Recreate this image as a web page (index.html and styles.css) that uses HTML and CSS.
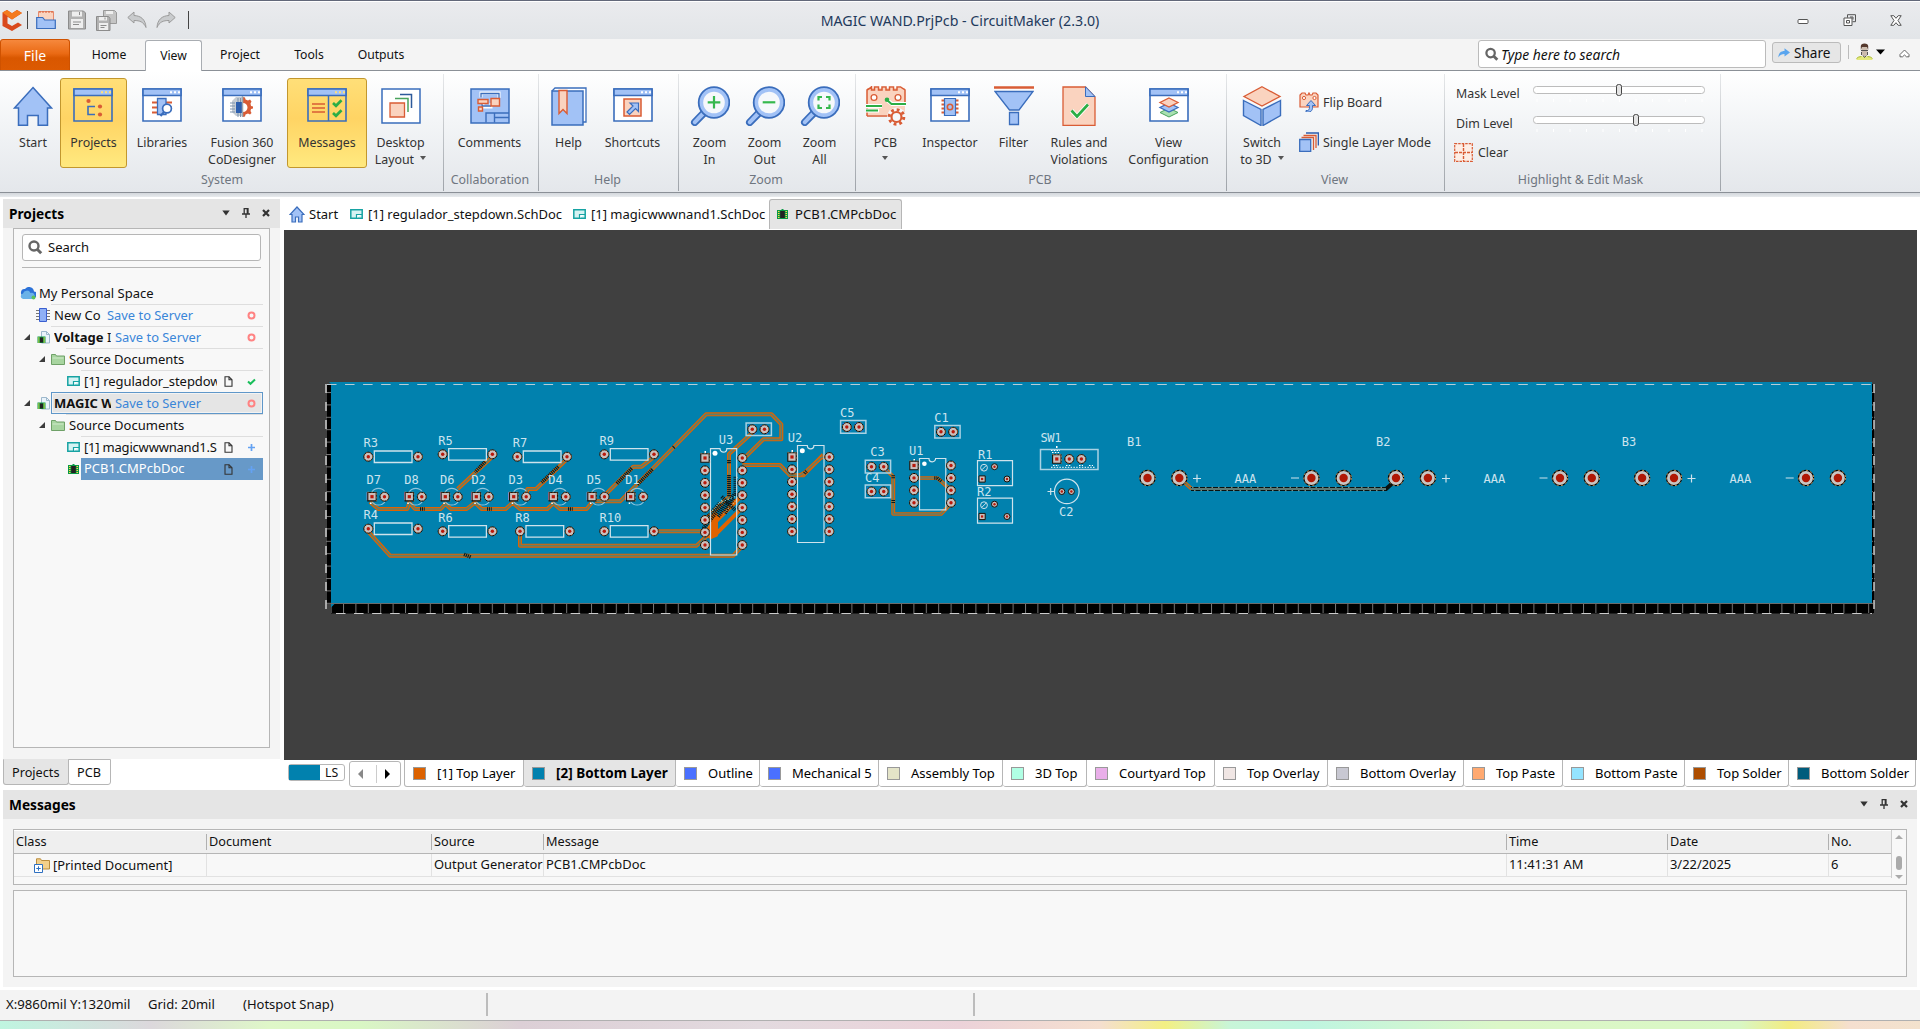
FILE: index.html
```html
<!DOCTYPE html>
<html lang="en">
<head>
<meta charset="utf-8">
<title>MAGIC WAND.PrjPcb - CircuitMaker (2.3.0)</title>
<link rel="stylesheet" href="styles.css">
</head>
<body>
<svg class="defs" width="0" height="0" aria-hidden="true">
  <defs>
    <symbol id="win" viewBox="0 0 40 40">
      <path d="M1 3h38v32H1z" fill="#fff" stroke="#3a6dbc" stroke-width="1.6"/>
      <path d="M1 3h38v6.5H1z" fill="#a2c2f6" stroke="#3a6dbc" stroke-width="1.6"/>
      <path d="M28 6.3h2M32 6.3h2M36 6.3h2" stroke="#fff" stroke-width="2"/>
    </symbol>
    <symbol id="winy" viewBox="0 0 40 40">
      <path d="M1 3h38v32H1z" fill="none" stroke="#3a6dbc" stroke-width="1.6"/>
      <path d="M1 3h38v6.5H1z" fill="#a2c2f6" stroke="#3a6dbc" stroke-width="1.6"/>
      <path d="M28 6.3h2M32 6.3h2M36 6.3h2" stroke="#ffe07a" stroke-width="2"/>
    </symbol>
    <symbol id="lens" viewBox="0 0 40 40">
      <path d="M13.5 23 2.5 34.500a2.600 2.600 0 0 0 4.500 3.500L17.500 27.500z" fill="#a2c2f6" stroke="#3a6dbc" stroke-width="1.800"/>
      <circle cx="24" cy="16.500" r="15.300" fill="#a2c2f6" stroke="#3a6dbc" stroke-width="1.800"/>
      <circle cx="24" cy="16.500" r="10.800" fill="#f6f8fb"/>
    </symbol>
    <symbol id="sch" viewBox="0 0 13 10">
      <path d="M.8.800h11.400v8.400H.8z" fill="#d6f3f3" stroke="#17a3a3" stroke-width="1.500"/>
      <path d="M6.500 9V5.500H12" fill="#fff" stroke="#17a3a3" stroke-width="1.200"/>
    </symbol>
    <symbol id="pcb" viewBox="0 0 13 11">
      <path d="M1 1h4l1-1h1l1 1h4v9H1z" fill="#0a9a46"/>
      <path d="M4.200 2h4.600v7H4.200z" fill="#222"/>
      <path d="M2 2.500h1.500M2 4.500h1.500M2 6.500h1.500M2 8.500h1.500M9.500 2.500H11M9.500 4.500H11M9.500 6.500H11M9.500 8.500H11" stroke="#ffd94a"/>
    </symbol>
    <symbol id="prj" viewBox="0 0 13 13">
      <path d="M4.500.5h5l3 3v8.500h-8z" fill="#eaf3fa" stroke="#9db8cc"/>
      <path d="M9.500.5v3h3" fill="none" stroke="#9db8cc"/>
      <path d="M.5 5.500h8v6.500h-8z" fill="#0a9a46"/>
      <path d="M3 6.500h3v5H3z" fill="#222"/>
      <path d="M1 7h1.500M1 9h1.500M1 11h1.500M6.500 7H8M6.500 9H8M6.500 11H8" stroke="#ffd94a"/>
    </symbol>
    <symbol id="folder" viewBox="0 0 14 12">
      <path d="M.5 11.500V1.500h4l1 1.500h8v8.500z" fill="#a8d5a0" stroke="#6fa168"/>
      <path d="M1.500 5h11" stroke="#cfeaca"/>
    </symbol>
    <symbol id="doc" viewBox="0 0 9 11">
      <path d="M1 .800h4l3 3v6.400H1z" fill="none" stroke="#333" stroke-width="1.100"/>
      <path d="M5 .800v3h3" fill="none" stroke="#333" stroke-width="1.100"/>
    </symbol>
    <symbol id="ring" viewBox="0 0 9 9"><circle cx="4.500" cy="4.500" r="3" fill="none" stroke="#ff8383" stroke-width="2"/></symbol>
    <symbol id="plus" viewBox="0 0 9 9"><path d="M4.500 1v7M1 4.500h7" stroke="#64a2f2" stroke-width="1.700"/></symbol>
    <symbol id="check" viewBox="0 0 9 9"><path d="M1 4.500l2.500 2.300L8 2.500" fill="none" stroke="#1abf5b" stroke-width="2"/></symbol>
    <symbol id="tri" viewBox="0 0 6 6"><path d="M6 0v6H0z" fill="#3c3c3c"/></symbol>
    <symbol id="mag" viewBox="0 0 15 15">
      <circle cx="6" cy="6" r="4.500" fill="none" stroke="#666" stroke-width="2.400"/>
      <path d="M9.200 9.200l4 4" stroke="#666" stroke-width="3"/>
    </symbol>
    <symbol id="down" viewBox="0 0 8 6"><path d="M.3.500h7.400L4 5.500z" fill="#333"/></symbol>
    <symbol id="pin" viewBox="0 0 8 10"><path d="M2.200 6V.700h3.800V6M0 6h8M4 6v4M5.300.700V6" fill="none" stroke="#333" stroke-width="1.300"/></symbol>
    <symbol id="close" viewBox="0 0 8 8"><path d="M1 1l6 6M7 1L1 7" stroke="#333" stroke-width="2.200"/></symbol>

    <!-- board primitives -->
    <g id="p">
      <circle r="4.500" fill="#c9bfbd" stroke="#000" stroke-width="1"/>
      <circle r="4.300" fill="none" stroke="#b9783c" stroke-width=".8" stroke-dasharray="1.500 2"/>
      <circle r="1.700" fill="#b9190b"/>
    </g>
    <g id="s">
      <path d="M-4.200-4.200h8.400v8.400h-8.400z" fill="#c9bfbd" stroke="#1c1208" stroke-width="1.100"/>
      <path d="M-4.700-4.700h9.400v9.400" fill="none" stroke="#b98f62" stroke-width=".6" stroke-dasharray="2 1.500"/>
      <path d="M-1.600-1.600h3.200v3.200h-3.200z" fill="#b9190b"/>
    </g>
    <g id="b">
      <circle r="7.600" fill="#c9c5c3" stroke="#000" stroke-width="1.200"/>
      <circle r="7.700" fill="none" stroke="#d79a52" stroke-width=".9" stroke-dasharray="2 2.500"/>
      <circle r="4.200" fill="#b01805"/>
    </g>
    <g id="t">
      <circle r="3" fill="#c9bfbd" stroke="#1c1208"/>
      <circle r="1.200" fill="#b9190b"/>
    </g>
    <g id="res">
      <path d="M6-5.700h37.700V5.800H6z" fill="none" stroke="#cfe3ec" stroke-width="1.300"/>
      <use href="#p"/><use href="#p" x="49.700"/>
    </g>
    <g id="led">
      <path d="M0-5a8 8 0 0 1 13 0M0 5a8 8 0 0 0 13 0" fill="none" stroke="#8fc3dc" stroke-width="1.100"/>
      <path d="M-4.800-4.500v8" stroke="#e79ad6"/>
      <path d="M-2 6.500h1.500" stroke="#fff" stroke-width="1.500"/>
      <use href="#s"/><use href="#p" x="12.500"/>
    </g>
    <g id="cap">
      <path d="M-6.200-6.400h25.300V6.200H-6.200z" fill="none" stroke="#a9d2e4" stroke-width="1.500"/>
      <use href="#p"/><use href="#p" x="12.200"/>
      <path d="M-4-4l1 1M4 3.500l-1 1M8.500-4l1 1M16 3.500l-1 1" stroke="#3560ff"/>
    </g>
    <g id="trim">
      <path d="M0 0h35v25H0z" fill="none" stroke="#cfe3ec" stroke-width="1.200"/>
      <circle cx="6.500" cy="7" r="3.400" fill="none" stroke="#cfe3ec"/><path d="M4.300 9.200l4.400-4.400" stroke="#cfe3ec"/>
      <use href="#t" x="17" y="6"/><use href="#t" x="29.500" y="18.300"/>
      <path d="M1.500 15.200h6.200v6.200H1.500z" fill="#c9bfbd" stroke="#1c1208"/><path d="M3.500 17.200h2.200v2.200H3.500z" fill="#b9190b"/>
    </g>
    <g id="pins"><use href="#p" y="12.400"/><use href="#p" y="24.800"/><use href="#p" y="37.200"/></g>
    <pattern id="tickH" x="343" y="604" width="12.400" height="10" patternUnits="userSpaceOnUse"><path d="M.5 0v9" stroke="#777"/></pattern>
    <pattern id="tickV" x="326" y="392" width="6" height="12.400" patternUnits="userSpaceOnUse"><path d="M0 .5h5" stroke="#777"/></pattern>
  </defs>
</svg>

<header class="titlebar">
  <div class="quick">
    <svg width="22" height="22" viewBox="0 0 22 22"><path d="M1.500 3.500L6 1l5 3.200L16 1l5 3-10 6.500-4.500-2.800v6.800l4.500 2.500 6-3.500 4 2.500-10 6L1.500 17z" fill="#d9481c"/><path d="M1.500 3.500L6 1l5 3.200L16 1l5 3-10 6.500z" fill="#f47a1f"/></svg>
    <i class="bar"></i>
    <svg class="q1" width="20" height="20" viewBox="0 0 20 20"><path d="M2.500 9V1.500h15V12" fill="#fad3bf" stroke="#e58b6e"/><path d="M4 1v2M7 1v2M10 1v2M13 1v2M16 1v2" stroke="#d95c35"/><path d="M.7 18.500V7.500h6l2 2.500h10.600v8.500z" fill="#a2c2f6" stroke="#3a6dbc" stroke-width="1.200"/></svg>
    <svg class="q2" width="20" height="20" viewBox="0 0 20 20"><path d="M1.500 1h15l2 2v16h-17z" fill="#b2b2b2" stroke="#8c8c8c"/><path d="M5 1.500h10v5H5zM4 9h12v9H4z" fill="#eee"/><path d="M12.500 2v3M6 12h8M6 14.500h6" stroke="#8c8c8c"/></svg>
    <svg class="q3" width="21" height="21" viewBox="0 0 21 21"><path d="M7.500.500h11l2 2v11h-13z" fill="#c4c4c4" stroke="#999"/><path d="M10 1h7v3h-7z" fill="#eee"/><path d="M.5 6.500h12l1.500 2v12H.5z" fill="#b2b2b2" stroke="#8c8c8c"/><path d="M3 7h8v3.500H3zM3 13h9v7H3z" fill="#eee"/><path d="M4.500 15.500h6M4.500 17.500h4M9 7.500v2" stroke="#8c8c8c"/></svg>
    <svg class="q4" width="20" height="18" viewBox="0 0 20 18"><path d="M.8 6.500L7 1v3.500c7 .3 11.500 4 12 12-2.500-5.500-6-7-12-7V12z" fill="#c9cbcd" stroke="#9b9b9b"/></svg>
    <svg class="q5" width="20" height="18" viewBox="0 0 20 18"><path d="M19.200 6.500L13 1v3.500C6 4.800 1.500 8.500 1 16.500c2.500-5.500 6-7 12-7V12z" fill="#c9cbcd" stroke="#9b9b9b"/></svg>
    <i class="bar last"></i>
  </div>
  <div class="title">MAGIC WAND.PrjPcb - CircuitMaker (2.3.0)</div>
  <div class="wbtns">
    <svg width="12" height="12" viewBox="0 0 12 12"><rect x="1" y="5.500" width="10" height="4" rx="1" fill="#fff" stroke="#555"/></svg>
    <svg width="13" height="12" viewBox="0 0 13 12"><path d="M4.500.700h8v7h-3M4.500.700v3" fill="none" stroke="#555"/><path d="M1 4h8v7.500H1z" fill="#fff" stroke="#555"/><path d="M3.500 6.500h3v2.500h-3zM7 3h3v2.500" fill="none" stroke="#555"/></svg>
    <svg width="12" height="11" viewBox="0 0 12 11"><path d="M.8.700h3L6 3.300 8.200.700h3L8 5.500l3.200 4.800h-3L6 7.700l-2.200 2.600h-3L4 5.500z" fill="#fff" stroke="#555"/></svg>
  </div>
</header>

<nav class="menubar">
  <a class="file">File</a>
  <a class="mi home">Home</a>
  <a class="mi view">View</a>
  <a class="mi project">Project</a>
  <a class="mi tools">Tools</a>
  <a class="mi outputs">Outputs</a>
  <div class="mright">
    <div class="tsearch"><svg width="14" height="15"><use href="#mag"/></svg><em>Type here to search</em></div>
    <div class="share"><svg width="12" height="10" viewBox="0 0 12 10"><path d="M.3 9.500C.5 5 3 3 6.500 3V.300L12 4.500 6.500 8.500V6C4 6 2 6.500.3 9.500z" fill="#5aa5ee"/></svg>Share</div>
    <i class="msep"></i>
    <svg class="user" width="17" height="18" viewBox="0 0 17 18"><path d="M.5 17c0-2.500 3-3 5-3.500h6c2 .5 5 1 5 3.500z" fill="#e4ea7c"/><path d="M.5 15.500q2-2 5-2M16.500 15.500q-2-2-5-2" stroke="#a9b820" fill="none"/><path d="M5.500 4h6v7l-3 3-3-3z" fill="#cbbcae"/><path d="M4.800 7V3Q5 .500 8.500.500T12.200 3v4L11 4H6z" fill="#54382c"/><path d="M5 7.500h7M7 12.500l1.500 2 2-2M5.500 9v3M11.500 9v3" stroke="#555" fill="none"/></svg>
    <svg class="ucaret" width="9" height="6" viewBox="0 0 9 6"><path d="M0 .500h9L4.500 5.500z"/></svg>
    <svg class="coll" width="11" height="9" viewBox="0 0 11 9"><path d="M1 5.500L5.500 1 10 5.500v2.300H7.500L5.500 6 3.500 7.800H1z" fill="#fff" stroke="#666"/></svg>
  </div>
</nav>

<section class="ribbon">
  <div class="group g-system">
    <div class="btns">
      <div class="rb w-start"><svg width="40" height="40" viewBox="0 0 40 40"><path d="M20 1.500L38.500 22h-4v17.300H25.200V29.500H14.500v9.800H5.500V22h-4z" fill="#a2c2f6" stroke="#3a6dbc" stroke-width="1.500"/></svg><span>Start</span></div>
      <div class="rb on w-proj"><svg width="40" height="40" viewBox="0 0 40 40"><use href="#winy"/><path d="M22 20.500h-7v8h7" fill="none" stroke="#3a6dbc" stroke-width="1.600"/><g fill="#d95c35"><circle cx="15.500" cy="15" r="2.100"/><circle cx="27" cy="20.500" r="2.100"/><circle cx="27" cy="28.500" r="2.100"/></g></svg><span>Projects</span></div>
      <div class="rb w-lib"><svg width="40" height="40" viewBox="0 0 40 40"><use href="#win"/><path d="M10 16.500h20M10 21.500h20M10 26.500h8" stroke="#d95c35" stroke-width="1.900"/><path d="M15.500 12.500h8.500v16h-8.500z" fill="#a2c2f6" stroke="#3a6dbc" stroke-width="1.300"/><circle cx="25" cy="22.500" r="4.400" fill="#fff" stroke="#3a6dbc" stroke-width="1.700"/><path d="M22 26l-3.500 4" stroke="#3a6dbc" stroke-width="2"/></svg><span>Libraries</span></div>
      <div class="rb w-fus"><svg width="40" height="40" viewBox="0 0 40 40"><use href="#win"/><path d="M20 11v19h-6l-4-4V15l4-4z" fill="#c5ccd3"/><path d="M14 16h6v11h-6z" fill="#2d5fae"/><path d="M8 17h5M8 20h5M8 23h5M8 26h5M16 12v4M18.500 12v4M16 27v4M18.500 27v4" stroke="#7d93ad"/><path d="M21 11l2 .5.500 2 2.500 1 2-1 1.500 2-1 2 .5 2.500 2 .5v2l-2 .5-.5 2 1 2-1.500 1.500-2-1-2.500 1-.5 2-2 .5v-5a4.500 4.500 0 0 0 0-9z" fill="#d95c35"/><path d="M20.500 10v21" stroke="#9aa5b1" stroke-width="1.500"/></svg><span>Fusion 360<br>CoDesigner</span></div>
      <div class="rb on w-msg"><svg width="40" height="40" viewBox="0 0 40 40"><use href="#winy"/><path d="M21.500 10v25" stroke="#3a6dbc" stroke-width="1.500"/><path d="M5 18h13M5 22h13M5 26h13" stroke="#d95c35" stroke-width="1.700"/><path d="M26 17l3 2.800 5.500-5.500M26 27l3 2.800 5.500-5.500" fill="none" stroke="#2cae46" stroke-width="2.700"/></svg><span>Messages</span></div>
      <div class="rb w-desk"><svg width="40" height="40" viewBox="0 0 40 40"><path d="M1 3h38v34H1z" fill="#fff" stroke="#3a6dbc" stroke-width="1.500"/><path d="M19 8.500h11.500V22" fill="none" stroke="#2d5a9a" stroke-width="1.500"/><path d="M14 12.500h13V26" fill="none" stroke="#4aa35c" stroke-width="1.500"/><path d="M9 17h14.500v14H9z" fill="#fad3bf" stroke="#d95c35" stroke-width="1.300"/></svg><span>Desktop<br>Layout <i class="car"></i></span></div>
    </div>
    <div class="gl">System</div>
  </div>
  <div class="group g-collab">
    <div class="btns"><div class="rb w-com"><svg width="40" height="40" viewBox="0 0 40 40"><path d="M1 3h38v34H1z" fill="#a2c2f6" stroke="#3a6dbc" stroke-width="1.500"/><path d="M11 11.500V7h18v5M13 16v5M11 21h10v-4" fill="none" stroke="#fff" stroke-width="3"/><path d="M11 11.500V7.500h18V12M12 17v5M12 20h9" fill="none" stroke="#3a6dbc" stroke-width="1.300"/><path d="M8 13.500h10v4H8zM21 12.500h8.500V20H21zM8.500 21h4v4h-4z" fill="#fad3bf" stroke="#d95c35" stroke-width="1.400"/><path d="M16 36.500V27h8.500v9.500M24.500 27v9M24.500 31.500H39M24.500 27H39" fill="none" stroke="#3a6dbc" stroke-width="1.400"/></svg><span>Comments</span></div></div>
    <div class="gl">Collaboration</div>
  </div>
  <div class="group g-help">
    <div class="btns">
      <div class="rb w-help"><svg width="40" height="40" viewBox="0 0 40 40"><path d="M3 5l3-3h31v34h-3" fill="#fff" stroke="#3a6dbc" stroke-width="1.300"/><path d="M3 5h31v34H3z" fill="#a2c2f6" stroke="#3a6dbc" stroke-width="1.500"/><path d="M10 4.500h8v23l-4-4-4 4z" fill="#fad3bf" stroke="#d95c35" stroke-width="1.400"/></svg><span>Help</span></div>
      <div class="rb w-short"><svg width="40" height="40" viewBox="0 0 40 40"><use href="#win"/><path d="M11 13h17v17H11z" fill="#fad3bf" stroke="#d95c35" stroke-width="1.500"/><path d="M14 26l6-6-3-3h8.500v8.500l-3-3-6 6z" fill="#a2c2f6" stroke="#3a6dbc" stroke-width="1.200"/></svg><span>Shortcuts</span></div>
    </div>
    <div class="gl">Help</div>
  </div>
  <div class="group g-zoom">
    <div class="btns">
      <div class="rb w-zoom"><svg width="40" height="40" viewBox="0 0 40 40"><use href="#lens"/><path d="M24 10v12.500M17.700 16.300h12.600" stroke="#36b84e" stroke-width="2.200"/></svg><span>Zoom<br>In</span></div>
      <div class="rb w-zoom"><svg width="40" height="40" viewBox="0 0 40 40"><use href="#lens"/><path d="M17.700 16.300h12.600" stroke="#36b84e" stroke-width="2.200"/></svg><span>Zoom<br>Out</span></div>
      <div class="rb w-zoom"><svg width="40" height="40" viewBox="0 0 40 40"><use href="#lens"/><path d="M18.500 14.500v-3.500h3.500M26 11h3.500v3.500M29.500 18.500v3.500H26M22 22h-3.500v-3.500" fill="none" stroke="#36b84e" stroke-width="2.200"/></svg><span>Zoom<br>All</span></div>
    </div>
    <div class="gl">Zoom</div>
  </div>
  <div class="group g-pcb">
    <div class="btns">
      <div class="rb w-pcb"><svg width="40" height="40" viewBox="0 0 40 40"><path d="M1 2h38v27H1z" fill="#fad3bf"/><path d="M1 30V4l4-2.500M5.500 0v4h3V1h4v3h3.500V1h4v3h3.500V1h4v3H31V1h3.500L39 4v13M1 30h21" fill="none" stroke="#d95c35" stroke-width="1.500"/><circle cx="8" cy="11.500" r="2.900" fill="#fff" stroke="#d95c35" stroke-width="1.300"/><circle cx="32" cy="11.500" r="2.900" fill="#fff" stroke="#d95c35" stroke-width="1.300"/><path d="M21 14l5 4h14M0 20h16M0 24.500h13" stroke="#fff" stroke-width="4" fill="none"/><path d="M21 14l4.500 4H40M0 20h16M0 24.500h12" stroke="#2cae46" stroke-width="2" fill="none"/><circle cx="21" cy="13.700" r="2.300" fill="#2cae46"/><circle cx="30.500" cy="31" r="9.500" fill="#f5f7fa"/><circle cx="30.500" cy="31" r="7.300" fill="none" stroke="#d95c35" stroke-width="3" stroke-dasharray="2.800 2.930"/><circle cx="30.500" cy="31" r="5" fill="#f5f7fa" stroke="#d95c35" stroke-width="2.200"/></svg><span>PCB<br><i class="car c2"></i></span></div>
      <div class="rb w-insp"><svg width="40" height="40" viewBox="0 0 40 40"><use href="#win"/><path d="M11.500 14.500h17M11.500 18.500h17M11.500 22.500h17M11.500 26.500h17" stroke="#d95c35" stroke-width="2.200"/><path d="M14.500 12.500h11v17h-11z" fill="#a2c2f6" stroke="#3a6dbc" stroke-width="1.200"/><circle cx="20" cy="21" r="2.700" fill="none" stroke="#d95c35" stroke-width="1.600"/></svg><span>Inspector</span></div>
      <div class="rb w-filt"><svg width="40" height="40" viewBox="0 0 40 40"><path d="M0 1.500h40" stroke="#d95c35" stroke-width="2.500"/><path d="M1 5.500h38L25 24h-9.500zM15.500 26.500h9v12h-9z" fill="#a2c2f6" stroke="#3a6dbc" stroke-width="1.300"/></svg><span>Filter</span></div>
      <div class="rb w-rules"><svg width="40" height="40" viewBox="0 0 40 40"><path d="M4 1h22.500L36 11v28.500H4z" fill="#fad3bf" stroke="#d95c35" stroke-width="1.300"/><path d="M26.500.800L36 10.500h-9.500z" fill="#a2c2f6" stroke="#3a6dbc"/><path d="M12.500 24.500l5.500 6 11-12" fill="none" stroke="#fff" stroke-width="4.500"/><path d="M12.500 24.500l5.500 6 11-12" fill="none" stroke="#2cae46" stroke-width="2.700"/></svg><span>Rules and<br>Violations</span></div>
      <div class="rb w-conf"><svg width="40" height="40" viewBox="0 0 40 40"><use href="#win"/><path d="M20 22l9 4.500-9 4.500-9-4.500z" fill="#a8e0b0" stroke="#4aa35c"/><path d="M20 17l9 4.500-9 4.500-9-4.500z" fill="#a2c2f6" stroke="#3a6dbc" stroke-width="1.300"/><path d="M20 12l9 4.500-9 4.500-9-4.500z" fill="#fad3bf" stroke="#d95c35" stroke-width="1.300"/></svg><span>View<br>Configuration</span></div>
    </div>
    <div class="gl">PCB</div>
  </div>
  <div class="group g-view">
    <div class="btns">
      <div class="rb w-3d"><svg width="40" height="40" viewBox="0 0 40 40"><path d="M20 .800L38 10.500 20 20 2 10.500z" fill="#fad3bf" stroke="#d95c35" stroke-width="1.300"/><path d="M1.500 14.500L19 23.500v16L1.500 29.500zM38.500 14.500L21 23.500v16l17.500-10z" fill="#a2c2f6" stroke="#3a6dbc" stroke-width="1.400"/></svg><span>Switch<br>to 3D <i class="car"></i></span></div>
      <div class="stack">
        <div><svg width="20" height="20" viewBox="0 0 20 20"><path d="M1 15V3l2-2h3l1 2h2l1-2 1 2h2l1-2h3l2 2v12z" fill="#fad3bf" stroke="#d95c35" stroke-width="1.200"/><circle cx="5" cy="6" r="1.600" fill="#fff" stroke="#d95c35"/><circle cx="15.500" cy="6" r="1.600" fill="#fff" stroke="#d95c35"/><path d="M7 18.500c3 .5 3.500-1 3.500-4v-1H7.500L12 8.500l4.500 5h-3v2c0 3.500-2 5-6.500 4.500z" fill="#a2c2f6" stroke="#3a6dbc"/></svg>Flip Board</div>
        <div><svg width="20" height="20" viewBox="0 0 20 20"><path d="M7 1h12.500v12.500" fill="none" stroke="#2d5fae" stroke-width="1.600"/><path d="M4.500 3.500H17V16" fill="none" stroke="#d95c35" stroke-width="1.300"/><path d="M2.500 5.500h12V18" fill="none" stroke="#d95c35" stroke-width="1.300"/><path d="M.7 7.500h11v11.800H.7z" fill="#a2c2f6" stroke="#3a6dbc" stroke-width="1.300"/></svg>Single Layer Mode</div>
      </div>
    </div>
    <div class="gl">View</div>
  </div>
  <div class="group g-mask">
    <div class="sliders">
      <div class="srow"><label>Mask Level</label><svg width="173" height="26" viewBox="0 0 173 26"><rect x=".5" y="6.500" width="171" height="7" rx="3" fill="#fff" stroke="#bcbcbc"/><rect x="83.500" y="4.500" width="5" height="11" rx="2" fill="#e4e4e4" stroke="#444"/><path d="M4 19v3M20.500 19v3M37 19v3M53.500 19v3M70 19v3M86.500 19v3M103 19v3M119.500 19v3M136 19v3M152.500 19v3M169 19v3" stroke="#fff"/></svg></div>
      <div class="srow"><label>Dim Level</label><svg width="173" height="26" viewBox="0 0 173 26"><rect x=".5" y="6.500" width="171" height="7" rx="3" fill="#fff" stroke="#bcbcbc"/><rect x="100.500" y="4.500" width="5" height="11" rx="2" fill="#e4e4e4" stroke="#444"/><path d="M4 19v3M20.500 19v3M37 19v3M53.500 19v3M70 19v3M86.500 19v3M103 19v3M119.500 19v3M136 19v3M152.500 19v3M169 19v3" stroke="#fff"/></svg></div>
      <div class="clear"><svg width="19" height="19" viewBox="0 0 19 19"><path d="M.7.700h17.600v17.600H.7z" fill="#fdeee6" stroke="#d95c35" stroke-width="1.200" stroke-dasharray="2.500 1"/><path d="M9.500 1v17M1 9.500h17" stroke="#d95c35" stroke-width="1.400" stroke-dasharray="3 1"/></svg>Clear</div>
    </div>
    <div class="gl">Highlight &amp; Edit Mask</div>
  </div>
</section>

<main class="work">
  <aside class="left">
    <div class="panel">
      <div class="phead"><b>Projects</b><svg class="d1" width="8" height="6"><use href="#down"/></svg><svg class="d2" width="8" height="10"><use href="#pin"/></svg><svg class="d3" width="8" height="8"><use href="#close"/></svg></div>
      <div class="pbox">
        <div class="psearch"><svg width="15" height="15"><use href="#mag"/></svg>Search</div>
        <hr>
        <ul class="tree">
          <li class="r0"><svg width="16" height="13" viewBox="0 0 16 13"><path d="M4 9a3.500 3.500 0 0 1 1-7 5 5 0 0 1 9 2.500 3 3 0 0 1 0 6z" fill="#2c72d8"/><path d="M3 12a2.800 2.800 0 0 1 0-5.500A4 4 0 0 1 10.500 6a3 3 0 0 1 2 6z" fill="#6ab2e8"/><circle cx="13.500" cy="10.500" r="2" fill="#5bc25b"/></svg><span>My Personal Space</span></li>
          <li class="r1 l51"><svg width="14" height="14" viewBox="0 0 14 14"><path d="M0 2.500h14M0 5.500h14M0 8.500h14M0 11.500h14" stroke="#777"/><path d="M3.500.500h7v13h-7z" fill="#8fb0f5" stroke="#3a5fd0"/></svg><span class="clip w48">New Co</span><a>Save to Server</a><svg class="st" width="9" height="9"><use href="#ring"/></svg></li>
          <li class="r2 l51"><svg class="tg" width="6" height="6"><use href="#tri"/></svg><svg width="13" height="13"><use href="#prj"/></svg><span class="clip w56"><b>Voltage </b>I</span><a>Save to Server</a><svg class="st" width="9" height="9"><use href="#ring"/></svg></li>
          <li class="r3 l66"><svg class="tg" width="6" height="6"><use href="#tri"/></svg><svg width="14" height="12"><use href="#folder"/></svg><span>Source Documents</span></li>
          <li class="r4 l81"><svg width="13" height="10"><use href="#sch"/></svg><span class="clip w133">[1] regulador_stepdown</span><svg class="dc" width="9" height="11"><use href="#doc"/></svg><svg class="st" width="9" height="9"><use href="#check"/></svg></li>
          <li class="r2 sel"><svg class="tg" width="6" height="6"><use href="#tri"/></svg><svg width="13" height="13"><use href="#prj"/></svg><span class="selbox"><span class="clip w56"><b>MAGIC W</b></span><a>Save to Server</a></span><svg class="st" width="9" height="9"><use href="#ring"/></svg></li>
          <li class="r3 l66"><svg class="tg" width="6" height="6"><use href="#tri"/></svg><svg width="14" height="12"><use href="#folder"/></svg><span>Source Documents</span></li>
          <li class="r4 l81"><svg width="13" height="10"><use href="#sch"/></svg><span class="clip w133 tight">[1] magicwwwnand1.S</span><svg class="dc" width="9" height="11"><use href="#doc"/></svg><svg class="st" width="9" height="9"><use href="#plus"/></svg></li>
          <li class="r4 act"><svg width="13" height="11"><use href="#pcb"/></svg><span class="blue">PCB1.CMPcbDoc</span><svg class="dc" width="9" height="11"><use href="#doc"/></svg><svg class="st" width="9" height="9"><use href="#plus"/></svg></li>
        </ul>
      </div>
    </div>
    <div class="ptabs"><span class="cur">Projects</span><span>PCB</span></div>
  </aside>

  <section class="right">
    <div class="dtabs">
      <span class="dt a1"><svg width="16" height="17" viewBox="0 0 16 17"><path d="M8 1l7 7.500h-2V16H9.500v-5h-3v5H3V8.500H1z" fill="#a2c2f6" stroke="#3a6dbc" stroke-width="1.200"/></svg>Start</span>
      <span class="dt a2"><svg width="13" height="10"><use href="#sch"/></svg>[1] regulador_stepdown.SchDoc</span>
      <span class="dt a3"><svg width="13" height="10"><use href="#sch"/></svg>[1] magicwwwnand1.SchDoc</span>
      <span class="dt a4"><svg width="13" height="11"><use href="#pcb"/></svg>PCB1.CMPcbDoc</span>
    </div>
    <svg class="board" width="1633" height="530" viewBox="284 230 1633 530">
      <path d="M327 384h4v220h-4zM331 604h1507v9.500H331z" fill="#000"/>
      <path d="M1838 604h35v9.500h-35zM1871 384h3v229h-3z" fill="#000"/>
      <path d="M331 603.500h1541v10H331z" fill="url(#tickH)"/>
      <path d="M326 384h5v228h-5zM1872 384h3v228h-3z" fill="url(#tickV)"/>
      <path d="M329 382h1543v221.500H335l-4 4V384z" fill="#0181ae"/>
      <path d="M331 603.500h1541" stroke="#6b6b6b"/>
      <path d="M326 384.500H1872" stroke="#b9cdd6" stroke-width="1.100" stroke-dasharray="9.500 8.550" stroke-dashoffset="-1"/>
      <path d="M326 384v229M1874 384v229" stroke="#ccc" stroke-width="1.500" stroke-dasharray="9 9"/>
      <path d="M331 613.500H1872" stroke="#ccc" stroke-width="1.100" stroke-dasharray="9.500 8.550" stroke-dashoffset="-5"/>

      <g fill="none" stroke-linejoin="round">
        <g id="tr1" transform="translate(320 380) scale(.33333)">
          <g stroke="#e06300" stroke-width="12">
            <path d="M150 366l25 21h87l6-19 17 19h77l14-15 17 15h47l25-19 20 19h72l21-19 22 19h82l18-17 20 17h80l15-19M825 364h75l30-29L1158 103h197l29 30v45h-54l-55 54M515 232L413 327M738 240l-90 87h-26l-2 18M1000 232l-35 28h-25l-85 85M145 455l65 72h1030l25-27M600 462v35h530l40-38M1010 454h140M1297 158l-70 64v128l-72 70M1267 255h113l30 31h40l60-62M1267 346l-100 98M1267 383l-80 80-20 10M1250 360l-95 98"/>
            <path d="M1175 405v65l13-5v-60z" fill="#e06300"/>
          </g>
          <g stroke="#5c7f6c" stroke-width="4.800">
            <path d="M150 366l25 21h87l6-19 17 19h77l14-15 17 15h47l25-19 20 19h72l21-19 22 19h82l18-17 20 17h80l15-19M825 364h75l30-29L1158 103h197l29 30v45h-54l-55 54M515 232L413 327M738 240l-90 87h-26l-2 18M1000 232l-35 28h-25l-85 85M145 455l65 72h1030l25-27M600 462v35h530l40-38M1010 454h140M1297 158l-70 64v128l-72 70M1267 255h113l30 31h40l60-62"/>
          </g>
          <g stroke="#08191c" stroke-width="11" stroke-dasharray="3.500 2.500">
            <path d="M300 387h14M501 387h14M744 387h14M432 523l22 9M495 245l-30 32M715 260l-50 47M935 265l-45 46M997 268l-45 46M1060 203l4-4M1227 240v10M1227 285v65M1246 290v60M1195 410l50-70M1150 445l70-85M1215 400l25-45M1205 350l40 40M1165 408l35-40M1455 278l6-7"/>
          </g>
          <path d="M1195 370l50-20M1210 400l40-40M1250 290l12 10M1170 400l40-45" stroke="#9fe8df" stroke-width="3" stroke-dasharray="4 6"/>
        </g>
        <g transform="translate(800 380) scale(.35714 .33333)">
          <path d="M0 286l15-10 45-44h22M240 268l21 22v112h134l28-32M325 294h60l38 37M1072 303l25 24" stroke="#e06300" stroke-width="11"/>
          <path d="M0 286l15-10 45-44h22M240 268l21 22v112h134l28-32M325 294h60l38 37M1072 303l25 24" stroke="#5c7f6c" stroke-width="4.500"/>
          <path d="M12 280l8-8M261 286v10M261 360v10M376 294h8M384 294l12 10" stroke="#08191c" stroke-width="10" stroke-dasharray="3 3"/>
        </g>
        <path d="M1191 489h195l9-8" stroke="#0a1210" stroke-width="4"/>
        <path d="M1191 489h195" stroke="#5c7a76" stroke-width="1.800"/>
        <path d="M1192 487.300h193M1194 490.700h190" stroke="#cfe8d8" stroke-width=".7" stroke-dasharray="1.500 5"/>
      </g>

      <g fill="none" stroke="#cfe3ec" stroke-width="1.200">
        <path d="M710.500 448.700h9.500a3.300 3.300 0 0 0 6.800 0h9.900V555h-26.200zM797.500 445.500h9.800a3.300 3.300 0 0 0 6.600 0H824v97h-26.500zM919.500 458.500h9.500a3.300 3.300 0 0 0 6.600 0h10.200v51.300h-26.300z"/>
        <path d="M1040.500 449.500h57.500v20h-57.500z" stroke="#a9d2e4" stroke-width="1.500"/>
        <circle cx="1066.800" cy="491.400" r="12.300"/>
        <path d="M1047.500 491.500h6.500M1050.700 488v7M1193 478.500h8M1197 474.500v8M1442 478.500h8M1446 474.500v8M1687.500 478.500h8M1691.500 474.500v8M1291 478h8M1539.500 478h8M1785.700 478h8"/>
      </g>
      <g fill="none" stroke="#fff" stroke-dasharray="1.500 1.300">
        <path d="M1051 450.500h9M1052 452.500h8M1053 454.500h7" />
        <path d="M1051 467.300h44M1053 465.500h6M1066 465.500h5M1079 465.500h4M1089 465.500h4"/>
      </g>
      <g fill="#fff"><circle cx="715" cy="453.300" r="2.500"/><circle cx="802.300" cy="450.700" r="2.500"/><circle cx="924.400" cy="463.700" r="2.300"/><path d="M704.500 451h1.500v2h-1.500zM791.500 450h1.500v2h-1.500zM913.500 459h1.500v1.500h-1.500zM1056 446h1.500v2h-1.500z"/></g>

      <use href="#res" x="368.300" y="456.700"/><use href="#res" x="442.700" y="454.300"/><use href="#res" x="517.300" y="456.700"/><use href="#res" x="604.300" y="454.300"/>
      <use href="#res" x="368.300" y="528.700"/><use href="#res" x="442.700" y="531.300"/><use href="#res" x="520" y="531.300"/><use href="#res" x="604.300" y="531.300"/>
      <use href="#led" x="372" y="496.700"/><use href="#led" x="409.300" y="496.700"/><use href="#led" x="445.300" y="496.700"/><use href="#led" x="476.300" y="496.700"/><use href="#led" x="513.700" y="496.700"/><use href="#led" x="553.300" y="496.700"/><use href="#led" x="592" y="496.700"/><use href="#led" x="630.700" y="496.700"/>
      <use href="#cap" x="752.300" y="429.300"/><use href="#cap" x="846.800" y="427"/><use href="#cap" x="941" y="431.800"/><use href="#cap" x="871.500" y="466.700"/><use href="#cap" x="871.500" y="491.500"/>
      <use href="#s" x="705" y="458"/><use href="#pins" x="705" y="458"/><use href="#pins" x="705" y="495.200"/><use href="#p" x="705" y="545"/>
      <use href="#p" x="742.300" y="458"/><use href="#pins" x="742.300" y="458"/><use href="#pins" x="742.300" y="495.200"/><use href="#p" x="742.300" y="545"/>
      <use href="#s" x="792" y="457"/><use href="#pins" x="792" y="457"/><use href="#pins" x="792" y="494.200"/>
      <use href="#p" x="829.300" y="457"/><use href="#pins" x="829.300" y="457"/><use href="#pins" x="829.300" y="494.200"/>
      <use href="#s" x="914" y="465.500"/><use href="#pins" x="914" y="465.500"/><use href="#p" x="951" y="465.500"/><use href="#pins" x="951" y="465.500"/>
      <use href="#trim" x="977.500" y="460.700"/><use href="#trim" x="977.500" y="498.200"/>
      <use href="#s" x="1056.800" y="459"/><use href="#p" x="1069.300" y="459"/><use href="#p" x="1081.400" y="459"/>
      <use href="#t" x="1061.800" y="491.500"/><use href="#t" x="1071.400" y="491.500"/>
      <use href="#b" x="1147.500" y="478"/><use href="#b" x="1179.300" y="478"/><use href="#b" x="1311.400" y="478"/><use href="#b" x="1343.600" y="478"/><use href="#b" x="1396" y="478"/><use href="#b" x="1427.900" y="478"/><use href="#b" x="1560" y="478"/><use href="#b" x="1591.800" y="478"/><use href="#b" x="1642.100" y="478"/><use href="#b" x="1674" y="478"/><use href="#b" x="1806" y="478"/><use href="#b" x="1837.900" y="478"/>

      <g class="desig">
        <text x="363.500" y="447">R3</text><text x="438.200" y="444.700">R5</text><text x="512.800" y="447">R7</text><text x="599.500" y="444.700">R9</text>
        <text x="363.500" y="519.300">R4</text><text x="438.200" y="521.700">R6</text><text x="515.200" y="521.700">R8</text><text x="599.500" y="521.700">R10</text>
        <text x="366.500" y="483.500">D7</text><text x="404.200" y="483.500">D8</text><text x="440" y="483.500">D6</text><text x="471.500" y="483.500">D2</text><text x="508.500" y="483.500">D3</text><text x="548.200" y="483.500">D4</text><text x="586.700" y="483.500">D5</text><text x="625.300" y="483.500">D1</text>
        <text x="718.800" y="443.700">U3</text><text x="787.700" y="442.300">U2</text><text x="840" y="416.700">C5</text><text x="934.200" y="422">C1</text><text x="870.200" y="456">C3</text><text x="865" y="481.700">C4</text><text x="909" y="455">U1</text>
        <text x="978" y="459">R1</text><text x="977" y="496">R2</text><text class="tight" x="1040.500" y="442">SW1</text><text x="1059" y="515.700">C2</text>
        <text x="1127" y="446">B1</text><text x="1376" y="446">B2</text><text x="1621.700" y="446">B3</text>
        <text x="1234.500" y="482.500">AAA</text><text x="1483.500" y="482.500">AAA</text><text x="1729.500" y="482.500">AAA</text>
      </g>
    </svg>
    <div class="layers">
      <div class="ls"><i></i>LS</div>
      <div class="arrows"><svg width="7" height="10" viewBox="0 0 7 10"><path d="M6 0v10L1 5z" fill="#888"/></svg><svg width="7" height="10" viewBox="0 0 7 10"><path d="M1 0v10l5-5z"/></svg></div>
      <span class="lt t1"><i></i>[1] Top Layer</span><span class="lt t2"><i></i>[2] Bottom Layer</span><span class="lt t3"><i></i>Outline</span><span class="lt t4"><i></i>Mechanical 5</span><span class="lt t5"><i></i>Assembly Top</span><span class="lt t6"><i></i>3D Top</span><span class="lt t7"><i></i>Courtyard Top</span><span class="lt t8"><i></i>Top Overlay</span><span class="lt t9"><i></i>Bottom Overlay</span><span class="lt t10"><i></i>Top Paste</span><span class="lt t11"><i></i>Bottom Paste</span><span class="lt t12"><i></i>Top Solder</span><span class="lt t13"><i></i>Bottom Solder</span>
    </div>
  </section>
</main>

<section class="messages">
  <div class="phead mh"><b>Messages</b><svg class="d1" width="8" height="6"><use href="#down"/></svg><svg class="d2" width="8" height="10"><use href="#pin"/></svg><svg class="d3" width="8" height="8"><use href="#close"/></svg></div>
  <div class="mtable">
    <div class="grid">
      <div class="mrow hd"><span>Class</span><span>Document</span><span>Source</span><span>Message</span><span>Time</span><span>Date</span><span>No.</span></div>
      <div class="mrow"><span class="cls"><svg width="16" height="15" viewBox="0 0 16 15"><path d="M2.500 11V.800h4l1 1.700h8V11z" fill="#f2cf8a" stroke="#b98c3c"/><path d="M.5 6.500h8v8h-8z" fill="#fff" stroke="#2d6fc0"/><path d="M4.500 8.300v4.400M2.300 10.500h4.400" stroke="#2d6fc0"/></svg>[Printed Document]</span><span></span><span>Output Generator</span><span>PCB1.CMPcbDoc</span><span>11:41:31 AM</span><span>3/22/2025</span><span>6</span></div>
    </div>
    <div class="sbar"><i class="up"></i><i class="th"></i><i class="dn"></i></div>
  </div>
  <div class="mdetail"></div>
</section>

<footer class="status"><span class="s1">X:9860mil Y:1320mil</span><span class="s2">Grid: 20mil</span><span class="s3">(Hotspot Snap)</span><i class="ss"></i><i class="ss two"></i></footer>
<div class="taskbar"></div>
</body>
</html>
```
FILE: styles.css
```css
* { box-sizing: border-box; }
html { height: 1029px; overflow: hidden; }
body {
  margin: 0; width: 1920px; height: 1029px; overflow: hidden; background: #fff; color: #111;
  font: 13px/17px "Noto Sans", "Open Sans", sans-serif; display: flex; flex-direction: column;
}
svg { display: block; flex: none; }
i { font-style: normal; }
.defs { position: absolute; }

/* title bar */
.titlebar {
  height: 39px; flex: none; display: grid; grid-template-columns: 400px 1fr 400px; align-items: center;
  border-top: 1px solid #62687a; background: linear-gradient(#fff 0 1px, #eaebee 1px, #e2e5e8);
}
.quick { display: flex; align-items: center; padding-left: 1px; }
.bar { width: 1px; height: 18px; background: #444; margin-left: 4px; }
.q1 { margin-left: 8px; } .q2 { margin-left: 11px; } .q3 { margin-left: 9px; } .q4 { margin-left: 10px; } .q5 { margin-left: 9px; }
.bar.last { margin-left: 12px; }
.title { text-align: center; font-size: 14.2px; color: #1f3a5c; white-space: nowrap; }
.wbtns { display: flex; justify-content: flex-end; gap: 34px; padding-right: 18px; align-items: center; }

/* ribbon tabs */
.menubar { height: 32px; flex: none; background: #f4f4f4; border-bottom: 1px solid #8b9097; display: flex; }
.file {
  width: 70px; height: 31px; border-radius: 3px 3px 0 0; border: 1px solid #cf5200; border-bottom: 0;
  background: linear-gradient(#f6883c, #ea6a14 45%, #d95700 60%, #dc5a02); color: #fff; font-size: 14px; line-height: 31px; text-align: center;
}
.mi { font-size: 12.2px; line-height: 32px; text-align: center; height: 31px; }
.home { width: 76px; padding-left: 2px; }
.view { width: 57px; height: 31px; margin-top: 1px; line-height: 30px; margin-left: -1px; background: #fff; border: 1px solid #a9adb2; border-bottom: 0; border-radius: 3px 3px 0 0; }
.project { width: 76px; } .tools { width: 62px; } .outputs { width: 82px; }
.mright { margin-left: auto; display: flex; align-items: flex-start; width: 442px; }
.tsearch { width: 288px; height: 28px; margin-top: 1px; border: 1px solid #bbb; border-radius: 3px; background: #fff; display: flex; align-items: center; padding-left: 6px; gap: 2px; font-size: 13.9px; }
.share { width: 69px; height: 21px; margin: 3px 0 0 6px; border: 1px solid #bbb; border-radius: 3px; background: #e6e6e6; display: flex; align-items: center; gap: 4px; padding-left: 5px; font-size: 13.6px; }
.msep { width: 1px; height: 14px; background: #bbb; margin: 6px 0 0 7px; }
.user { margin: 4px 0 0 7px; } .ucaret { margin: 10px 0 0 3px; } .coll { margin: 10px 0 0 14px; }

/* ribbon */
.ribbon {
  height: 126px; flex: none; display: flex; padding-bottom: 5px; color: #333; font-size: 12.4px;
  background: linear-gradient(#fff 0, #f3f5f7 50px, #e4e7eb 121px, #8b9097 121px 122px, #d3d7dc 122px, #e8ebee 126px);
}
.group { height: 121px; display: flex; flex-direction: column; position: relative; }
.group::after { content: ""; position: absolute; right: 0; top: 3px; bottom: 1px; width: 1px; background: linear-gradient(#e6e8ea, #9ea3a9); }
.g-system { width: 444px; } .g-collab { width: 95px; } .g-help { width: 140px; } .g-zoom { width: 177px; } .g-pcb { width: 371px; } .g-view { width: 218px; } .g-mask { width: 276px; }
.btns { display: flex; height: 97px; padding-top: 7px; }
.g-system .btns { padding-left: 5px; }
.rb { height: 90px; display: flex; flex-direction: column; align-items: center; border: 1px solid transparent; padding-top: 7px; text-align: center; white-space: nowrap; }
.rb span { margin-top: 8px; }
.rb.on { border-color: #c2972e; border-radius: 3px; background: linear-gradient(#ffdf78, #ffd464 45%, #ffe97f); }
.w-start { width: 55px; } .w-proj { width: 67px; } .w-lib { width: 70px; } .w-fus { width: 90px; } .w-msg { width: 80px; } .w-desk { width: 67px; }
.w-start span { padding-left: 1px; }
.rb.on svg { margin-left: -1px; }
.w-com { width: 99px; margin-left: -4px; } .w-help { width: 61px; } .w-short { width: 67px; }
.g-help .btns { margin-left: -1px; }
.w-zoom { width: 55px; } .g-zoom .btns { padding-left: 3px; }
.w-pcb { width: 59px; } .w-insp { width: 70px; } .w-filt { width: 57px; } .w-rules { width: 74px; } .w-conf { width: 105px; }
.w-3d { width: 70px; }
.w-3d svg { margin-left: -1px; }
.car { display: inline-block; border: 3px solid transparent; border-top: 4px solid #555; border-bottom: 0; margin-left: 3px; vertical-align: 4px; }
.c2 { margin-left: 0; }
.gl { height: 24px; line-height: 23px; text-align: center; color: #6f7680; }
.g-collab .gl, .g-help .gl, .g-zoom .gl, .g-pcb .gl, .g-view .gl { padding-right: 3px; }
.g-mask .gl { padding-right: 5px; }
.stack { padding: 14px 0 0 2px; display: flex; flex-direction: column; gap: 20px; }
.stack div { display: flex; align-items: center; gap: 4px; height: 20px; white-space: nowrap; font-size: 12.5px; }
.sliders { height: 97px; padding: 9px 0 0 11px; }
.srow { display: flex; height: 30px; }
.srow label { width: 77px; line-height: 27px; }
.clear { display: flex; align-items: center; gap: 5px; padding-top: 3px; margin-left: -2px; }

/* work area */
.work { display: flex; height: 593px; flex: none; }
.left { width: 284px; padding: 2px 4px 0 3px; }
.panel { width: 277px; height: 560px; background: #f4f4f4; }
.phead { height: 29px; background: #e5e5e5; display: flex; align-items: center; padding: 0 10px 1px 6px; font-size: 13.7px; color: #000; }
.phead .d1 { margin-left: auto; } .phead .d2 { margin-left: 12px; } .phead .d3 { margin-left: 12px; }
.pbox { margin: 0 0 0 10px; width: 257px; height: 520px; border: 1px solid #b6b6b6; background: #f8f8f8; padding: 5px 8px; }
.psearch { height: 27px; border: 1px solid #b6b6b6; border-radius: 3px; background: #fff; display: flex; align-items: center; gap: 5px; padding-left: 5px; }
hr { border: 0; height: 1px; background: #b6b6b6; margin: 6px 0 14px; }
.tree { list-style: none; margin: 0 -2px 0 -8px; padding: 0; }
.tree li { height: 22px; display: flex; align-items: center; position: relative; white-space: nowrap; line-height: 20px; color: #111; }
.tree li::before { content: ""; position: absolute; top: 0; right: 0; height: 1px; background: #dedede; width: 0; }
.tree .l51::before { width: 212px; } .tree .l66::before { width: 197px; } .tree .l81::before { width: 182px; }
.tree a { color: #3a86d8; font-size: 12.9px; }
.r0 { padding-left: 6px; } .r0 span { margin-left: 3px; }
.r1 { padding-left: 22px; } .r1 .clip { margin-left: 4px; }
.r2 { padding-left: 10px; } .r2 .tg { margin-right: 7px; } .r2 > .clip { margin-left: 4px; }
.r3 { padding-left: 25px; } .r3 .tg { margin-right: 6px; } .r3 span { margin-left: 4px; }
.r4 { padding-left: 53px; } .r4 span { margin-left: 4px; }
.clip { overflow: hidden; display: block; height: 20px; }
.w48 { width: 48px; margin-right: 5px; } .w56 { width: 57px; margin-right: 4px; } .w133 { width: 133px; letter-spacing: -.05px; }
.clip.tight { letter-spacing: -.2px; }
.st { position: absolute; right: 7px; top: 7px; }
.dc { position: absolute; right: 30px; top: 6px; }
.selbox { position: absolute; left: 37px; right: 0; top: 0; height: 22px; border: 1px solid #5f97c9; background: #e5e5e5; box-shadow: inset 0 0 0 1px #fff8; display: flex; padding-left: 2px; }
.selbox + .st { z-index: 1; }
.act .blue { background: #6799c8; color: #fff; flex: 1; height: 22px; line-height: 21px; padding-left: 3px; margin-left: 1px; }
.ptabs { display: flex; }
.ptabs span { height: 26px; border: 1px solid #b6b6b6; border-radius: 0 0 3px 3px; padding: 4px 0 0 8px; width: 43px; margin-left: -1px; background: #fff; font-size: 12.7px; }
.ptabs .cur { width: 66px; background: #e5e5e5; margin-left: 0; border-top-color: #e5e5e5; }

.right { width: 1636px; }
.dtabs { height: 33px; padding: 2px 0 0 5px; display: flex; white-space: nowrap; }
.dt { height: 30px; display: flex; align-items: center; gap: 5px; }
.a1 { width: 61px; gap: 4px; } .a2 { width: 223px; } .a3 { width: 196px; }
.a4 { width: 133px; background: #e5e5e5; border: 1px solid #b6b6b6; border-bottom: 0; border-radius: 3px 3px 0 0; padding-left: 6px; gap: 6px; font-size: 13.1px; }
.board { background: #404040; }
.desig text { font: 12px "DejaVu Sans Mono", "Liberation Mono", monospace; fill: #cde4ee; }
.desig .tight { letter-spacing: -.4px; }

.layers { display: flex; height: 28px; padding-left: 4px; white-space: nowrap; }
.ls { width: 57px; height: 17px; margin-top: 4px; border: 1px solid #b6b6b6; border-radius: 3px; display: flex; gap: 5px; line-height: 17px; font-size: 12.3px; align-items: center; }
.ls i { width: 31px; height: 15px; background: #0181ae; }
.arrows { width: 52px; height: 26px; margin: 1px 3px 0 4px; border: 1px solid #b6b6b6; border-radius: 3px; display: flex; align-items: center; justify-content: space-between; padding: 0 9px 0 7px; background: linear-gradient(#ccc, #ccc) 26px 3px/1px 18px no-repeat; }
.lt { height: 27px; border: 1px solid #b6b6b6; border-top: 0; border-left: 0; border-radius: 0 0 3px 3px; display: flex; align-items: center; padding-left: 8px; gap: 11px; color: #000; flex: none; }
.lt i { width: 13px; height: 13px; border: 1px solid #999; background: #0181ae; flex: none; }
.t1 { width: 120px; border-left: 1px solid #b6b6b6; } .t1 i { background: #dc6200; }
.t2 { width: 152px; background: #e5e5e5; font-weight: 700; font-size: 13.5px; }
.t3 { width: 84px; } .t3 i, .t4 i { background: #4a70ff; }
.t4 { width: 119px; } .t5 { width: 124px; } .t5 i { background: #e4e4c8; }
.t6 { width: 84px; } .t6 i { background: #b0ffe4; }
.t7 { width: 128px; } .t7 i { background: #e9aee9; }
.t8 { width: 113px; } .t8 i { background: #f0e6e4; }
.t9 { width: 136px; } .t9 i { background: #c8c8d2; }
.t10 { width: 99px; } .t10 i { background: #ffa970; }
.t11 { width: 122px; } .t11 i { background: #94e4ff; }
.t12 { width: 104px; } .t12 i { background: #ad4d00; }
.t13 { width: 127px; } .t13 i { background: #005c7c; }

/* messages */
.messages { width: 1914px; height: 197px; flex: none; margin-left: 3px; background: #f4f4f4; }
.mh { padding-right: 9px; }
.mtable { margin: 10px 0 0 10px; width: 1894px; height: 56px; border: 1px solid #b6b6b6; background: #f8f8f8; display: flex; }
.grid { width: 1879px; border-right: 1px solid #ccc; height: 48px; }
.mrow { display: grid; grid-template-columns: 193px 225px 112px 963px 161px 161px 1fr; height: 23px; border-bottom: 1px solid #e2e2e2; line-height: 21px; font-size: 12.9px; }
.mrow span { border-right: 1px solid #e2e2e2; padding-left: 2px; overflow: hidden; white-space: nowrap; }
.mrow span:last-child { border-right: 0; }
.hd { height: 24px; background: #efefef; border-bottom-color: #b6b6b6; box-shadow: inset 0 1px #fff; padding: 4px 0 3px; line-height: 15px; font-size: 12.7px; }
.hd span { border-right-color: #b0b0b0; }
.mrow .cls { display: flex; align-items: center; gap: 3px; padding-left: 20px; }
.sbar { width: 14px; display: flex; flex-direction: column; align-items: center; }
.up { margin-top: 5px; border: 4px solid transparent; border-bottom: 4px solid #aaa; border-top: 0; }
.th { margin-top: 17px; width: 6px; height: 14px; border-radius: 3px; background: #aaa; }
.dn { margin-top: 5px; border: 4px solid transparent; border-top: 4px solid #aaa; border-bottom: 0; }
.mdetail { margin: 5px 0 0 10px; width: 1894px; height: 87px; border: 1px solid #b6b6b6; background: #f8f8f8; }

.status { height: 31px; flex: none; margin-top: 3px; background: #f3f3f3; border-bottom: 1px solid #b0b0b0; display: flex; align-items: center; padding: 0 0 1px 6px; white-space: nowrap; }
.s1 { width: 142px; font-size: 13.2px; } .s2 { width: 95px; } .s3 { width: 243px; }
.ss { width: 2px; height: 23px; background: #bcbcbc; } .ss.two { margin-left: 485px; }
.taskbar { height: 8px; flex: none; background: linear-gradient(90deg, #bff5e0 0, #dcd8dc 150px, #dff7c8 270px, #d9f7c4 360px, #dccfd6 520px, #e3dadf 760px, #ecd2d9 960px, #f5dfcf 1100px, #f3f083 1165px, #c8f5d8 1230px, #bff5e0 1310px, #dcf7c8 1500px, #d9f7c4 1740px, #f3ec80 1790px, #f5dfcf 1850px, #f3e2cd 1920px); }
```
